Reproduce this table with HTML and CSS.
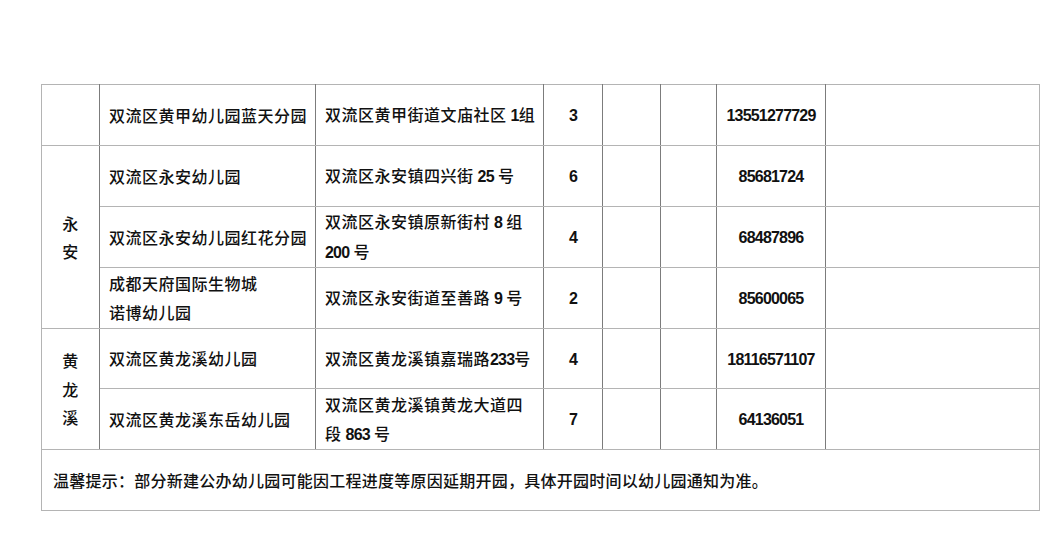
FILE: index.html
```html
<!DOCTYPE html>
<html lang="zh">
<head>
<meta charset="utf-8">
<title>双流区幼儿园</title>
<link rel="stylesheet" href="styles.css">
</head>
<body>
<div class="page">
<table class="grid">
  <colgroup>
    <col class="c1"><col class="c2"><col class="c3"><col class="c4"><col class="c5"><col class="c6"><col class="c7"><col class="c8">
  </colgroup>
  <tbody>
    <tr>
      <td class="town"></td>
      <td class="name">双流区黄甲幼儿园蓝天分园</td>
      <td class="addr">双流区黄甲街道文庙社区 <b>1</b>组</td>
      <td class="num"><b>3</b></td>
      <td></td>
      <td></td>
      <td class="num"><b>13551277729</b></td>
      <td></td>
    </tr>
    <tr>
      <td class="town" rowspan="3">永<br>安</td>
      <td class="name">双流区永安幼儿园</td>
      <td class="addr">双流区永安镇四兴街 <b>25</b> 号</td>
      <td class="num"><b>6</b></td>
      <td></td>
      <td></td>
      <td class="num"><b>85681724</b></td>
      <td></td>
    </tr>
    <tr>
      <td class="name">双流区永安幼儿园红花分园</td>
      <td class="addr">双流区永安镇原新街村 <b>8</b> 组<br><b>200</b> 号</td>
      <td class="num"><b>4</b></td>
      <td></td>
      <td></td>
      <td class="num"><b>68487896</b></td>
      <td></td>
    </tr>
    <tr>
      <td class="name">成都天府国际生物城<br>诺博幼儿园</td>
      <td class="addr">双流区永安街道至善路 <b>9</b> 号</td>
      <td class="num"><b>2</b></td>
      <td></td>
      <td></td>
      <td class="num"><b>85600065</b></td>
      <td></td>
    </tr>
    <tr class="short">
      <td class="town" rowspan="2">黄<br>龙<br>溪</td>
      <td class="name">双流区黄龙溪幼儿园</td>
      <td class="addr">双流区黄龙溪镇嘉瑞路<b>233</b>号</td>
      <td class="num"><b>4</b></td>
      <td></td>
      <td></td>
      <td class="num"><b>18116571107</b></td>
      <td></td>
    </tr>
    <tr>
      <td class="name">双流区黄龙溪东岳幼儿园</td>
      <td class="addr">双流区黄龙溪镇黄龙大道四<br>段 <b>863</b> 号</td>
      <td class="num"><b>7</b></td>
      <td></td>
      <td></td>
      <td class="num"><b>64136051</b></td>
      <td></td>
    </tr>
    <tr>
      <td class="note" colspan="8">温馨提示：部分新建公办幼儿园可能因工程进度等原因延期开园，具体开园时间以幼儿园通知为准。</td>
    </tr>
  </tbody>
</table>
</div>
</body>
</html>
```

FILE: styles.css
```css
html, body {
  margin: 0;
  padding: 0;
  background: #ffffff;
}

.page {
  padding: 84px 0 0 41px;
}

.grid {
  border-collapse: collapse;
  table-layout: fixed;
  width: 999px;
  font-family: "Noto Sans CJK SC", "Liberation Sans", sans-serif;
  font-size: 16px;
  font-weight: 500;
  letter-spacing: 0.5px;
  color: #111111;
  border: 1px solid #b4b4b4;
}

.c1 { width: 58px; }
.c2 { width: 216px; }
.c3 { width: 228px; }
.c4 { width: 59px; }
.c5 { width: 58px; }
.c6 { width: 56px; }
.c7 { width: 109px; }
.c8 { width: 214px; }

.grid td {
  height: 61px;
  padding: 0 0 0 9px;
  box-sizing: border-box;
  vertical-align: middle;
  line-height: 29px;
  border-left: 1px solid #7c7c7c;
  border-right: 1px solid #7c7c7c;
  border-top: 1px solid #b4b4b4;
  border-bottom: 1px solid #b4b4b4;
  white-space: nowrap;
}

.grid tr.short td {
  height: 60px;
}

.grid td:first-child {
  border-left-color: #b4b4b4;
}

.grid td:last-child {
  border-right-color: #b4b4b4;
}

.grid b {
  font-family: "Liberation Sans", sans-serif;
  font-weight: bold;
  letter-spacing: -0.8px;
}

.grid td.town {
  text-align: center;
  padding: 0;
  line-height: 28.5px;
}

.grid td.num {
  text-align: center;
  padding: 0;
}

.grid td.note {
  padding-left: 11px;
  font-size: 16px;
  letter-spacing: 0.25px;
}
```
